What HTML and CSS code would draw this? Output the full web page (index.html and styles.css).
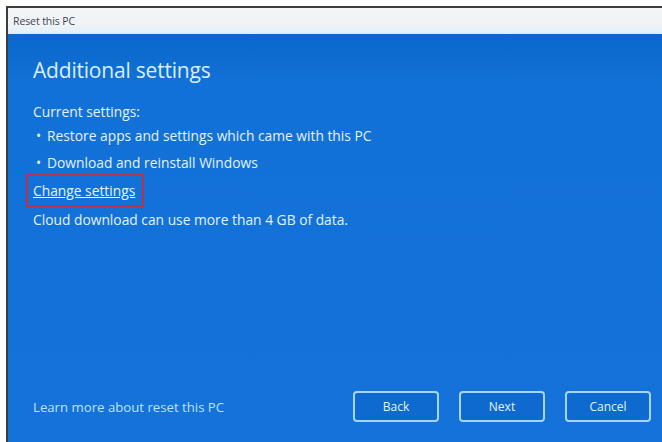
FILE: index.html
```html
<!DOCTYPE html>
<html>
<head>
<meta charset="utf-8">
<link rel="stylesheet" href="styles.css">
</head>
<body>
<div class="window">
  <div class="titlebar">Reset this PC</div>
  <div class="panel">
    <div class="content">
      <h1 class="heading">Additional settings</h1>
      <p class="label">Current settings:</p>
      <ul class="list">
        <li class="item">Restore apps and settings which came with this PC</li>
        <li class="item item-second">Download and reinstall Windows</li>
      </ul>
      <p class="change-row"><span class="change-link">Change settings</span></p>
      <p class="note">Cloud download can use more than 4 GB of data.</p>
    </div>
    <div class="footer">
      <span class="learn">Learn more about reset this PC</span>
      <div class="buttons">
        <button class="btn">Back</button>
        <button class="btn">Next</button>
        <button class="btn">Cancel</button>
      </div>
    </div>
  </div>
</div>
</body>
</html>
```

FILE: styles.css
```css
html, body {
  margin: 0;
  padding: 0;
  background: #ffffff;
  width: 662px;
  height: 442px;
  overflow: hidden;
}
body {
  font-family: "Open Sans", "Noto Sans", sans-serif;
  padding: 6px 0 0 6px;
  box-sizing: border-box;
}
.window {
  height: 436px;
  border-top: 2px solid #3a3d42;
  border-left: 2px solid #3a3d42;
  display: flex;
  flex-direction: column;
  box-sizing: border-box;
}
.titlebar {
  height: 26px;
  flex: 0 0 26px;
  background: linear-gradient(#f4f5f6, #eef3f7 70%, #dfeefa);
  color: #3d4450;
  font-size: 10.5px;
  line-height: 26px;
  padding-left: 5px;
  letter-spacing: -0.1px;
}
.panel {
  flex: 1;
  background: linear-gradient(#0a67cc, #1271d6 12%, #1472d8);
  display: flex;
  flex-direction: column;
  justify-content: space-between;
  color: #e3f2ff;
}
.content {
  padding: 22px 0 0 25px;
}
.heading {
  margin: 0;
  font-weight: 400;
  font-size: 21px;
  line-height: 28px;
  color: #d9eeff;
  letter-spacing: -0.2px;
}
.label {
  margin: 18px 0 0;
  font-size: 13.8px;
  line-height: 19px;
}
.list {
  list-style: none;
  margin: 5px 0 0;
  padding: 0;
}
.item {
  font-size: 13.8px;
  line-height: 19px;
  padding-left: 14px;
  position: relative;
}
.item::before {
  content: "\2022";
  position: absolute;
  left: 3px;
  top: 0;
}
.item-second {
  margin-top: 8px;
}
.change-row {
  margin: 9px 0 0;
  font-size: 13.8px;
  line-height: 19px;
}
.change-link {
  display: inline-block;
  text-decoration: underline;
  color: #e6f4ff;
  outline: 2px solid #b8324e;
  outline-offset: 5px;
  padding: 0 2px 0 0;
}
.note {
  margin: 10px 0 0;
  font-size: 13.8px;
  line-height: 19px;
}
.footer {
  display: flex;
  align-items: center;
  justify-content: space-between;
  padding: 0 11px 20px 25px;
}
.learn {
  font-size: 13.2px;
  color: #bfe2ff;
}
.buttons {
  display: flex;
  gap: 20px;
}
.btn {
  width: 86px;
  height: 31px;
  border: 2px solid #a6d6ff;
  border-radius: 4px;
  background: #0f6acf;
  color: #e3f2ff;
  font-family: "Open Sans", "Noto Sans", sans-serif;
  font-size: 12px;
  padding: 0;
}
```
